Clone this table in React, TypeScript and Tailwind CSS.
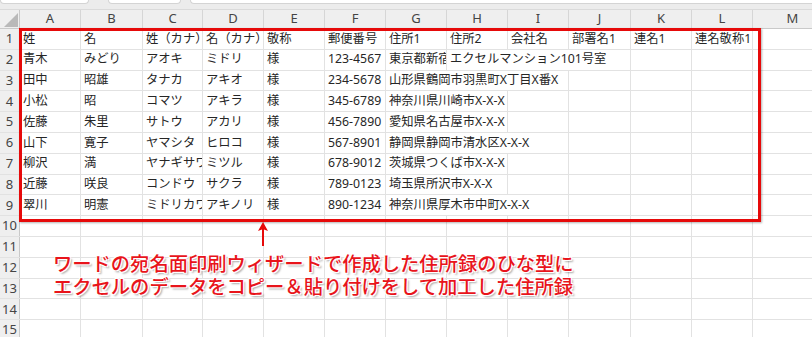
import React from "react";

const COLS = ["A", "B", "C", "D", "E", "F", "G", "H", "I", "J", "K", "L", "M"];
const WIDTHS = ["w-[61px]", "w-[62px]", "w-[60px]", "w-[61px]", "w-[61px]", "w-[61px]", "w-[61px]", "w-[61px]", "w-[61px]", "w-[62px]", "w-[61px]", "w-[61px]", "w-[80px]"];

const DATA: string[][] = [
  ["姓", "名", "姓（カナ）", "名（カナ）", "敬称", "郵便番号", "住所1", "住所2", "会社名", "部署名1", "連名1", "連名敬称1"],
  ["青木", "みどり", "アオキ", "ミドリ", "様", "123-4567", "東京都新宿", "エクセルマンション101号室"],
  ["田中", "昭雄", "タナカ", "アキオ", "様", "234-5678", "山形県鶴岡市羽黒町X丁目X番X"],
  ["小松", "昭", "コマツ", "アキラ", "様", "345-6789", "神奈川県川崎市X-X-X"],
  ["佐藤", "朱里", "サトウ", "アカリ", "様", "456-7890", "愛知県名古屋市X-X-X"],
  ["山下", "寛子", "ヤマシタ", "ヒロコ", "様", "567-8901", "静岡県静岡市清水区X-X-X"],
  ["柳沢", "満", "ヤナギサワ", "ミツル", "様", "678-9012", "茨城県つくば市X-X-X"],
  ["近藤", "咲良", "コンドウ", "サクラ", "様", "789-0123", "埼玉県所沢市X-X-X"],
  ["翠川", "明憲", "ミドリカワ", "アキノリ", "様", "890-1234", "神奈川県厚木市中町X-X-X"],
];

const ROWS = 15;

function Cell({ text, clip, w }: { text?: string; clip: boolean; w: string }) {
  return (
    <div
      className={`${w} shrink-0 h-full border-r border-[#e2e2e2] flex items-center pl-[3px] whitespace-nowrap ${clip ? "overflow-hidden" : ""}`}
    >
      {text ? (
        <span className="relative z-10 bg-white h-full flex items-center pr-[1px]">{text}</span>
      ) : null}
    </div>
  );
}

export default function App() {
  return (
    <div className="relative w-[812px] h-[337px] overflow-hidden bg-white font-['Noto_Sans','Noto_Sans_CJK_JP',sans-serif]">
      {/* top strip (formula bar remnants) */}
      <div className="h-[9px] bg-[#ececec] flex items-start">
        <div className="w-[89px] h-[4px] bg-white border border-t-0 border-[#d4d4d4] rounded-b-[4px]" />
        <div className="ml-[19px] w-[73px] h-[4px] bg-white border border-t-0 border-[#d4d4d4] rounded-b-[4px]" />
        <div className="ml-[9px] flex-1 h-[4px] bg-white border border-t-0 border-r-0 border-[#d4d4d4] rounded-bl-[4px]" />
      </div>

      {/* column header */}
      <div className="flex h-[20px] bg-[#efefef] border-b border-[#c9c9c9] border-t border-t-[#dadada]">
        <div className="w-[20px] shrink-0 h-full border-r border-[#c9c9c9] relative">
          <svg className="absolute left-[4px] top-[3px]" width="14" height="14" viewBox="0 0 14 14">
            <polygon points="14,0 14,14 0,14" fill="#b9b9b9" />
          </svg>
        </div>
        {COLS.map((c, i) => (
          <div
            key={c}
            className={`${WIDTHS[i]} shrink-0 h-full border-r border-[#d6d6d6] flex items-center justify-center text-[13px] text-[#444] font-['Noto_Sans',sans-serif]`}
          >
            {c}
          </div>
        ))}
      </div>

      {/* rows */}
      {Array.from({ length: ROWS }).map((_, r) => {
        const row = DATA[r] || [];
        return (
          <div key={r} className="flex h-[20.8px] border-b border-[#e2e2e2] text-[12.3px] text-[#262626]">
            <div className="w-[20px] shrink-0 h-full bg-[#efefef] border-r border-[#c9c9c9] flex items-center justify-center text-[13px] text-[#444] font-['Noto_Sans',sans-serif]">
              {r + 1}
            </div>
            {COLS.map((c, i) => {
              const t = row[i];
              const next = row[i + 1];
              return <Cell key={c} text={t} clip={!!next} w={WIDTHS[i]} />;
            })}
          </div>
        );
      })}

      {/* red frame */}
      <div className="absolute left-[19px] top-[28px] w-[742px] h-[194px] border-[3px] border-[#e60a0a] shadow-[1px_1px_2px_rgba(0,0,0,0.3)] z-20" />

      {/* arrow */}
      <svg className="absolute left-[257px] top-[222px] z-20" width="12" height="24" viewBox="0 0 12 24">
        <path d="M6 0 L11 9 L7 7.5 L7 24 L5 24 L5 7.5 L1 9 Z" fill="#e60a0a" />
      </svg>

      {/* annotation */}
      <div className="absolute left-[53px] top-[252px] z-20 text-[19.3px] leading-[23px] font-medium text-[#e8141b] whitespace-nowrap font-['Noto_Sans_CJK_JP',sans-serif] [text-shadow:1px_1px_0_#fff,-1px_-1px_0_#fff,1px_-1px_0_#fff,-1px_1px_0_#fff,2px_2px_2px_rgba(0,0,0,0.35)]">
        <div>ワードの宛名面印刷ウィザードで作成した住所録のひな型に</div>
        <div>エクセルのデータをコピー＆貼り付けをして加工した住所録</div>
      </div>
    </div>
  );
}
